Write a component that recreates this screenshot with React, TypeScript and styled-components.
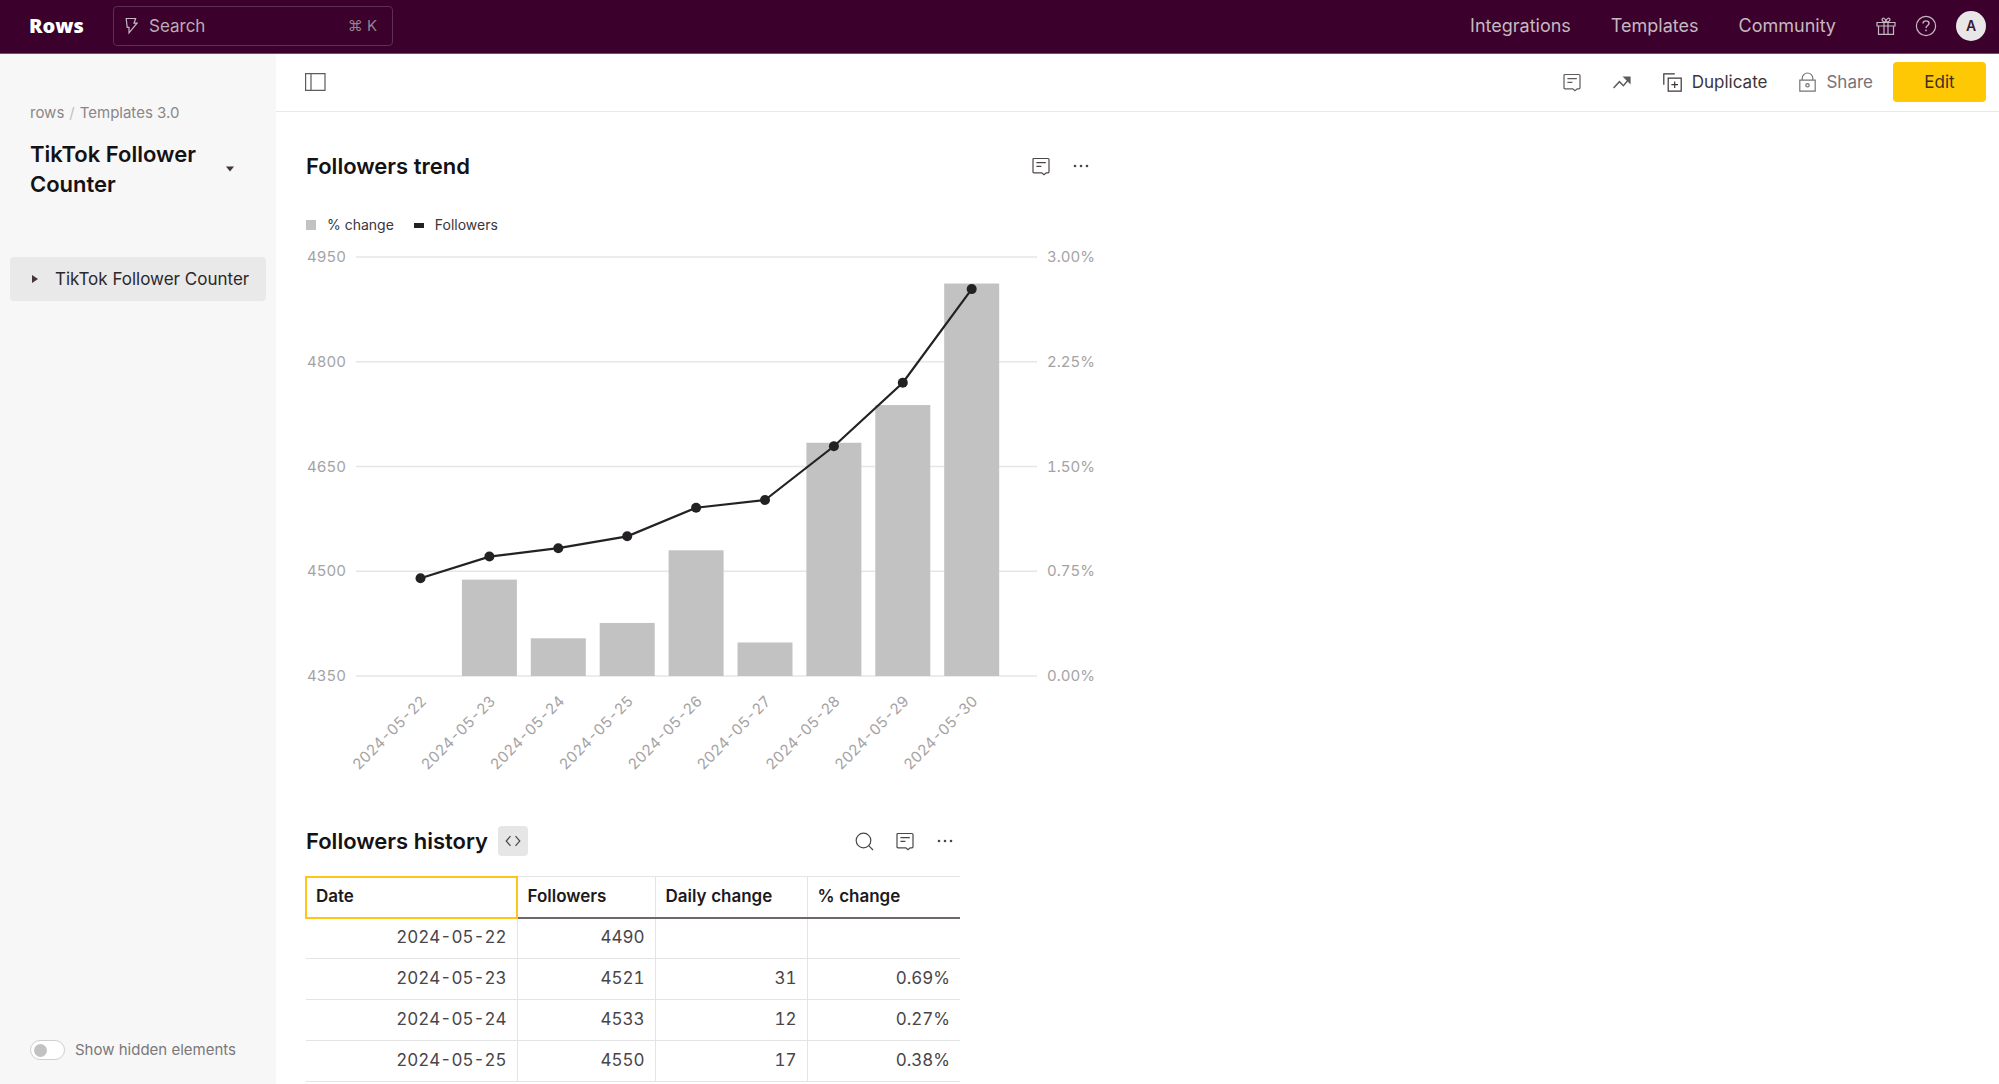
import React from 'react';
import styled, { createGlobalStyle } from 'styled-components';

const GlobalStyle = createGlobalStyle`
  *, *::before, *::after { box-sizing: border-box; }
  html, body { margin: 0; height: 100%; }
  #root { height: 100%; }
  body {
    background: #fff;
    color: #1c1a1c;
    font-family: Inter, "Liberation Sans", sans-serif;
    font-size: 17px;
    line-height: 24px;
    overflow: hidden;
  }
  button, input { font: inherit; color: inherit; }
  h1, h2, p { margin: 0; }
`;

const Page = styled.div`
  display: flex;
  flex-direction: column;
  height: 100vh;
`;

const TopBar = styled.header`
  display: flex;
  align-items: center;
  flex: none;
  height: 54px;
  padding: 0 13px 1px 29px;
  background: #3b002b;
  border-bottom: 1px solid #6f5269;
  color: #c4b9c0;
`;

const Logo = styled.a`
  width: 84px;
  color: #fff;
  font-family: "Open Sans", "Noto Sans", sans-serif;
  font-size: 20px;
  font-weight: 800;
  text-decoration: none;
`;

const SearchBox = styled.label`
  display: flex;
  align-items: center;
  gap: 11px;
  width: 280px;
  height: 40px;
  padding: 0 15px 0 11px;
  border: 1px solid #5d2f50;
  border-radius: 4px;
`;

const SearchInput = styled.input`
  flex: 1;
  min-width: 0;
  padding: 0;
  border: 0;
  outline: 0;
  background: transparent;
  &::placeholder { color: #b9adb5; opacity: 1; }
`;

const Shortcut = styled.span`
  color: #95828f;
  font-size: 15px;
`;

const TopNav = styled.nav`
  display: flex;
  align-items: center;
  gap: 40px;
  margin-left: auto;
`;

const NavLink = styled.a`
  color: inherit;
  font-size: 18px;
  text-decoration: none;
`;

const TopActions = styled.div`
  display: flex;
  align-items: center;
  gap: 19px;
  margin-left: 40px;
`;

const IconButton = styled.button`
  display: flex;
  padding: 0;
  border: 0;
  background: transparent;
  color: inherit;
  cursor: pointer;
`;

const Avatar = styled.button`
  width: 30px;
  height: 30px;
  padding: 0;
  border: 0;
  border-radius: 50%;
  background: #e9e6e8;
  color: #3b1a33;
  font-size: 14px;
  font-weight: 600;
`;

const Body = styled.div`
  display: flex;
  flex: 1;
  min-height: 0;
`;

const Sidebar = styled.aside`
  display: flex;
  flex-direction: column;
  flex: none;
  width: 276px;
  padding: 47px 10px 23px;
  background: #f7f7f7;
`;

const Breadcrumb = styled.nav`
  padding: 0 20px;
  color: #8a8688;
  font-size: 15px;
  a { color: inherit; text-decoration: none; }
  span { margin: 0 5px; color: #c2c0c1; }
`;

const TitleRow = styled.div`
  display: flex;
  align-items: center;
  gap: 20px;
  margin-top: 14px;
  padding: 0 32px 0 20px;
`;

const DocTitle = styled.h1`
  flex: 1;
  font-size: 22px;
  font-weight: 600;
  line-height: 30px;
  color: #141214;
`;

const TreeItem = styled.button`
  display: flex;
  align-items: center;
  gap: 15px;
  height: 44px;
  margin-top: 58px;
  padding: 0 16px 0 20px;
  border: 0;
  border-radius: 4px;
  background: #e9e9e9;
  color: #2b282b;
  text-align: left;
  white-space: nowrap;
`;

const ToggleLabel = styled.label`
  display: flex;
  align-items: center;
  gap: 10px;
  margin-top: auto;
  padding: 0 20px;
  height: 22px;
  color: #7b777a;
  font-size: 15px;
`;

const Toggle = styled.input`
  appearance: none;
  display: flex;
  align-items: center;
  width: 35px;
  height: 20px;
  margin: 0;
  padding: 0 3px;
  border: 1px solid #cfcfcf;
  border-radius: 10px;
  background: #fff;
  &::before {
    content: '';
    width: 13px;
    height: 13px;
    border-radius: 50%;
    background: #c2c2c2;
  }
  &:checked { justify-content: flex-end; }
`;

const Main = styled.main`
  display: flex;
  flex-direction: column;
  flex: 1;
  min-width: 0;
`;

const Toolbar = styled.div`
  display: flex;
  align-items: center;
  flex: none;
  height: 58px;
  padding: 0 13px 1px 29px;
  border-bottom: 1px solid #e9e9e9;
  color: #5f5a5e;
`;

const ToolbarActions = styled.div`
  display: flex;
  align-items: center;
  gap: 32px;
  margin-left: auto;
`;

const ToolButton = styled(IconButton)<{ $strong?: boolean }>`
  align-items: center;
  gap: 10px;
  color: ${p => (p.$strong ? '#3a363a' : '#787276')};
`;

const EditButton = styled.button`
  width: 93px;
  height: 40px;
  margin-left: 20px;
  border: 0;
  border-radius: 4px;
  background: #ffc805;
  color: #3a2f22;
`;

const Sheet = styled.div`
  flex: 1;
  min-height: 0;
  overflow: hidden;
  padding: 36px 30px 0;
`;

const Block = styled.section<{ $width: number; $gap?: number }>`
  max-width: ${p => p.$width}px;
  margin-top: ${p => p.$gap ?? 0}px;
`;

const BlockHeader = styled.div`
  display: flex;
  align-items: center;
  height: 36px;
  gap: 10px;
`;

const BlockTitle = styled.h2`
  font-size: 22px;
  font-weight: 600;
  line-height: 30px;
  color: #141214;
`;

const BlockActions = styled.div`
  display: flex;
  align-items: center;
  gap: 22px;
  margin-left: auto;
  padding-right: 6px;
  color: #4c464b;
`;

const CodeButton = styled(IconButton)`
  align-items: center;
  justify-content: center;
  width: 30px;
  height: 30px;
  border-radius: 4px;
  background: #e7e6e6;
  color: #4c464b;
`;

const Legend = styled.ul`
  display: flex;
  align-items: center;
  gap: 20px;
  margin: 29px 0 0;
  padding: 0;
  list-style: none;
  font-size: 14px;
  color: #3a363a;
`;

const LegendItem = styled.li`
  display: flex;
  align-items: center;
  gap: 11px;
`;

const Swatch = styled.span<{ $line?: boolean }>`
  width: 10px;
  height: ${p => (p.$line ? 5 : 10)}px;
  background: ${p => (p.$line ? '#242124' : '#c2c2c2')};
`;

const ChartSvg = styled.svg`
  display: block;
  width: 100%;
  overflow: visible;
  text { fill: #a5a3a4; font-size: 15px; font-variant-numeric: tabular-nums; }
`;

const Table = styled.table`
  width: 654px;
  margin-top: 17px;
  border-collapse: collapse;
  table-layout: fixed;
  font-size: 17px;
  font-variant-numeric: tabular-nums;
`;

const HeadCell = styled.th<{ $width: number; $active?: boolean }>`
  width: ${p => p.$width}px;
  height: 41px;
  padding: 0 10px 2px;
  border: 1px solid #e4e4e4;
  border-width: 1px 1px 2px 0;
  border-bottom-color: #6e686c;
  outline: ${p => (p.$active ? '2px solid #ffc61a' : 'none')};
  outline-offset: -1px;
  text-align: left;
  font-weight: 600;
  color: #1c1a1c;
  &:last-child { border-right: 0; }
`;

const Cell = styled.td`
  height: 41px;
  padding: 0 10px 2px;
  border: 1px solid #e4e4e4;
  border-width: 0 1px 1px 0;
  text-align: right;
  color: #4a4549;
  &:last-child { border-right: 0; }
`;

const line = { fill: 'none', stroke: 'currentColor', strokeWidth: 1.2 };

const BoltIcon = () => (
  <svg width="13" height="18" viewBox="0 0 13 18" aria-hidden="true" {...line}>
    <path d="M1.200 1.500h9.400L9 6.200h3L4 15.800V10.400H2.200z" />
  </svg>
);
const GiftIcon = () => (
  <svg width="20" height="20" viewBox="0 0 20 20" aria-hidden="true" {...line}>
    <path d="M1 6.500h18v3.500H1zM2.500 10v8.400h15V10M8 6.500v11.900M12 6.500v11.900M10 6C8.500 6 6 5.500 6 3.500S9.500 1.500 10 5.500C10.500 1.500 14 1.500 14 3.500S11.500 6 10 6z" />
  </svg>
);
const HelpIcon = () => (
  <svg width="22" height="22" viewBox="0 0 22 22" aria-hidden="true" {...line}>
    <circle cx="11" cy="11" r="9.600" />
    <path strokeWidth="1.400" d="M8 8.600C8 6.800 9.300 5.900 11 5.900s3 1 3 2.600c0 2-3 2.200-3 4.600M11 14.600v1.600" />
  </svg>
);
const PanelIcon = () => (
  <svg width="21" height="18" viewBox="0 0 21 18" aria-hidden="true" {...line}>
    <path d="M.6.600h19.400v16.800H.6zM6 .600v16.800" />
  </svg>
);
const CommentIcon = () => (
  <svg width="18" height="19" viewBox="0 0 18 19" aria-hidden="true" {...line}>
    <path d="M2 1.500h14q1 0 1 1v12.300q0 1-1 1h-1.800L12 17.800l-2.200-2H2q-1 0-1-1V2.500q0-1 1-1zM4.400 5.600h9.400M4.400 9.300h5" />
  </svg>
);
const TrendIcon = () => (
  <svg width="18" height="19" viewBox="0 0 18 19" aria-hidden="true" {...line}>
    <path strokeWidth="1.500" d="M.6 15l5.800-6.300 4 4L16 6" />
    <path d="M11 4h6v6z" fill="currentColor" />
  </svg>
);
const DuplicateIcon = () => (
  <svg width="19" height="19" viewBox="0 0 19 19" aria-hidden="true" {...line}>
    <path d="M.8 11.800V.800h11M5.200 5.200h13v13h-13zM11.700 8.400v6.600M8.400 11.700h6.600" />
  </svg>
);
const LockIcon = () => (
  <svg width="17" height="20" viewBox="0 0 17 20" aria-hidden="true" {...line}>
    <path d="M.8 8.200h15.400v11H.8zM3.200 8.200V6.300a5.300 5.300 0 0 1 10.600 0v1.900" />
    <circle cx="8.500" cy="13.300" r="1.700" />
  </svg>
);
const SearchIcon = () => (
  <svg width="19" height="19" viewBox="0 0 19 19" aria-hidden="true" {...line}>
    <circle cx="8.500" cy="8.500" r="7.300" />
    <path d="M13.700 13.700L18 18" />
  </svg>
);
const DotsIcon = () => (
  <svg width="18" height="18" viewBox="0 0 18 18" aria-hidden="true" fill="currentColor">
    <circle cx="3" cy="9" r="1.300" />
    <circle cx="9" cy="9" r="1.300" />
    <circle cx="15" cy="9" r="1.300" />
  </svg>
);
const CodeIcon = () => (
  <svg width="16" height="12" viewBox="0 0 16 12" aria-hidden="true" {...line}>
    <path d="M5.500 1.200L1.200 6l4.300 4.800M10.500 1.200L14.800 6l-4.300 4.800" />
  </svg>
);
const CaretDown = () => (
  <svg width="8" height="6" viewBox="0 0 8 6" aria-hidden="true" fill="#43333f">
    <path d="M0 .5h8L4 5.500z" />
  </svg>
);
const CaretRight = () => (
  <svg width="10" height="8" viewBox="0 0 10 8" aria-hidden="true" fill="#43333f">
    <path d="M2 0l6 4-6 4z" />
  </svg>
);

const history = [
  { date: '2024-05-22', followers: 4490, daily: '', pct: null },
  { date: '2024-05-23', followers: 4521, daily: '31', pct: 0.69 },
  { date: '2024-05-24', followers: 4533, daily: '12', pct: 0.27 },
  { date: '2024-05-25', followers: 4550, daily: '17', pct: 0.38 },
  { date: '2024-05-26', followers: 4591, daily: '41', pct: 0.9 },
  { date: '2024-05-27', followers: 4602, daily: '11', pct: 0.24 },
  { date: '2024-05-28', followers: 4679, daily: '77', pct: 1.67 },
  { date: '2024-05-29', followers: 4770, daily: '91', pct: 1.94 },
  { date: '2024-05-30', followers: 4904, daily: '134', pct: 2.81 },
];

const visibleRows = history.slice(0, 4);

const columns = [
  { label: 'Date', width: 211 },
  { label: 'Followers', width: 138 },
  { label: 'Daily change', width: 152 },
  { label: '% change', width: 153 },
];

const PLOT = { left: 50, right: 731, top: 20, bottom: 439 };
const ticks = [0, 1, 2, 3, 4];
const step = 68.9;
const xAt = (i: number) => 114.5 + i * step;
const yAt = (share: number) => PLOT.bottom - share * (PLOT.bottom - PLOT.top);

function FollowersChart() {
  const points = history.map((d, i) => [xAt(i), yAt((d.followers - 4350) / 600)]);
  return (
    <ChartSvg viewBox="0 0 790 530" role="img" aria-label="Followers and daily percentage change">
      {ticks.map(t => (
        <g key={t}>
          <path d={`M${PLOT.left} ${yAt(t / 4)}H${PLOT.right}`} stroke="#e6e6e6" strokeWidth="1.500" />
          <text x="40" y={yAt(t / 4) + 5} textAnchor="end">{4350 + t * 150}</text>
          <text x="741" y={yAt(t / 4) + 5}>{(t * 0.75).toFixed(2)}%</text>
        </g>
      ))}
      {history.map((d, i) =>
        d.pct ? (
          <rect key={d.date} x={xAt(i) - 27.5} width="55" y={yAt(d.pct / 3)} height={PLOT.bottom - yAt(d.pct / 3)} fill="#c2c2c2" />
        ) : null
      )}
      <polyline points={points.map(p => p.join(',')).join(' ')} fill="none" stroke="#242124" strokeWidth="2.200" />
      {points.map(([x, y]) => (
        <circle key={x} cx={x} cy={y} r="5" fill="#242124" />
      ))}
      {history.map((d, i) => (
        <text key={d.date} textAnchor="end" transform={`translate(${xAt(i) + 7} ${PLOT.bottom + 26}) rotate(-45)`}>
          {d.date}
        </text>
      ))}
    </ChartSvg>
  );
}

export default function App() {
  return (
    <Page>
      <GlobalStyle />
      <TopBar>
        <Logo href="#">Rows</Logo>
        <SearchBox>
          <BoltIcon />
          <SearchInput type="text" placeholder="Search" aria-label="Search" />
          <Shortcut>⌘ K</Shortcut>
        </SearchBox>
        <TopNav>
          <NavLink href="#">Integrations</NavLink>
          <NavLink href="#">Templates</NavLink>
          <NavLink href="#">Community</NavLink>
        </TopNav>
        <TopActions>
          <IconButton aria-label="What's new"><GiftIcon /></IconButton>
          <IconButton aria-label="Help"><HelpIcon /></IconButton>
          <Avatar>A</Avatar>
        </TopActions>
      </TopBar>
      <Body>
        <Sidebar>
          <Breadcrumb>
            <a href="#">rows</a><span>/</span><a href="#">Templates 3.0</a>
          </Breadcrumb>
          <TitleRow>
            <DocTitle>TikTok Follower Counter</DocTitle>
            <IconButton aria-label="Spreadsheet menu"><CaretDown /></IconButton>
          </TitleRow>
          <TreeItem><CaretRight />TikTok Follower Counter</TreeItem>
          <ToggleLabel>
            <Toggle type="checkbox" />
            Show hidden elements
          </ToggleLabel>
        </Sidebar>
        <Main>
          <Toolbar>
            <IconButton aria-label="Toggle sidebar"><PanelIcon /></IconButton>
            <ToolbarActions>
              <IconButton aria-label="Comments"><CommentIcon /></IconButton>
              <IconButton aria-label="Activity"><TrendIcon /></IconButton>
              <ToolButton $strong><DuplicateIcon />Duplicate</ToolButton>
              <ToolButton><LockIcon />Share</ToolButton>
            </ToolbarActions>
            <EditButton>Edit</EditButton>
          </Toolbar>
          <Sheet>
            <Block $width={790}>
              <BlockHeader>
                <BlockTitle>Followers trend</BlockTitle>
                <BlockActions>
                  <IconButton aria-label="Comment on chart"><CommentIcon /></IconButton>
                  <IconButton aria-label="Chart options"><DotsIcon /></IconButton>
                </BlockActions>
              </BlockHeader>
              <Legend>
                <LegendItem><Swatch />% change</LegendItem>
                <LegendItem><Swatch $line />Followers</LegendItem>
              </Legend>
              <FollowersChart />
            </Block>
            <Block $width={654} $gap={56}>
              <BlockHeader>
                <BlockTitle>Followers history</BlockTitle>
                <CodeButton aria-label="View as code"><CodeIcon /></CodeButton>
                <BlockActions>
                  <IconButton aria-label="Search table"><SearchIcon /></IconButton>
                  <IconButton aria-label="Comment on table"><CommentIcon /></IconButton>
                  <IconButton aria-label="Table options"><DotsIcon /></IconButton>
                </BlockActions>
              </BlockHeader>
              <Table>
                <thead>
                  <tr>
                    {columns.map((c, i) => (
                      <HeadCell key={c.label} $width={c.width} $active={i === 0} scope="col">{c.label}</HeadCell>
                    ))}
                  </tr>
                </thead>
                <tbody>
                  {visibleRows.map(d => (
                    <tr key={d.date}>
                      <Cell>{d.date}</Cell>
                      <Cell>{d.followers}</Cell>
                      <Cell>{d.daily}</Cell>
                      <Cell>{d.pct === null ? '' : `${d.pct.toFixed(2)}%`}</Cell>
                    </tr>
                  ))}
                </tbody>
              </Table>
            </Block>
          </Sheet>
        </Main>
      </Body>
    </Page>
  );
}
